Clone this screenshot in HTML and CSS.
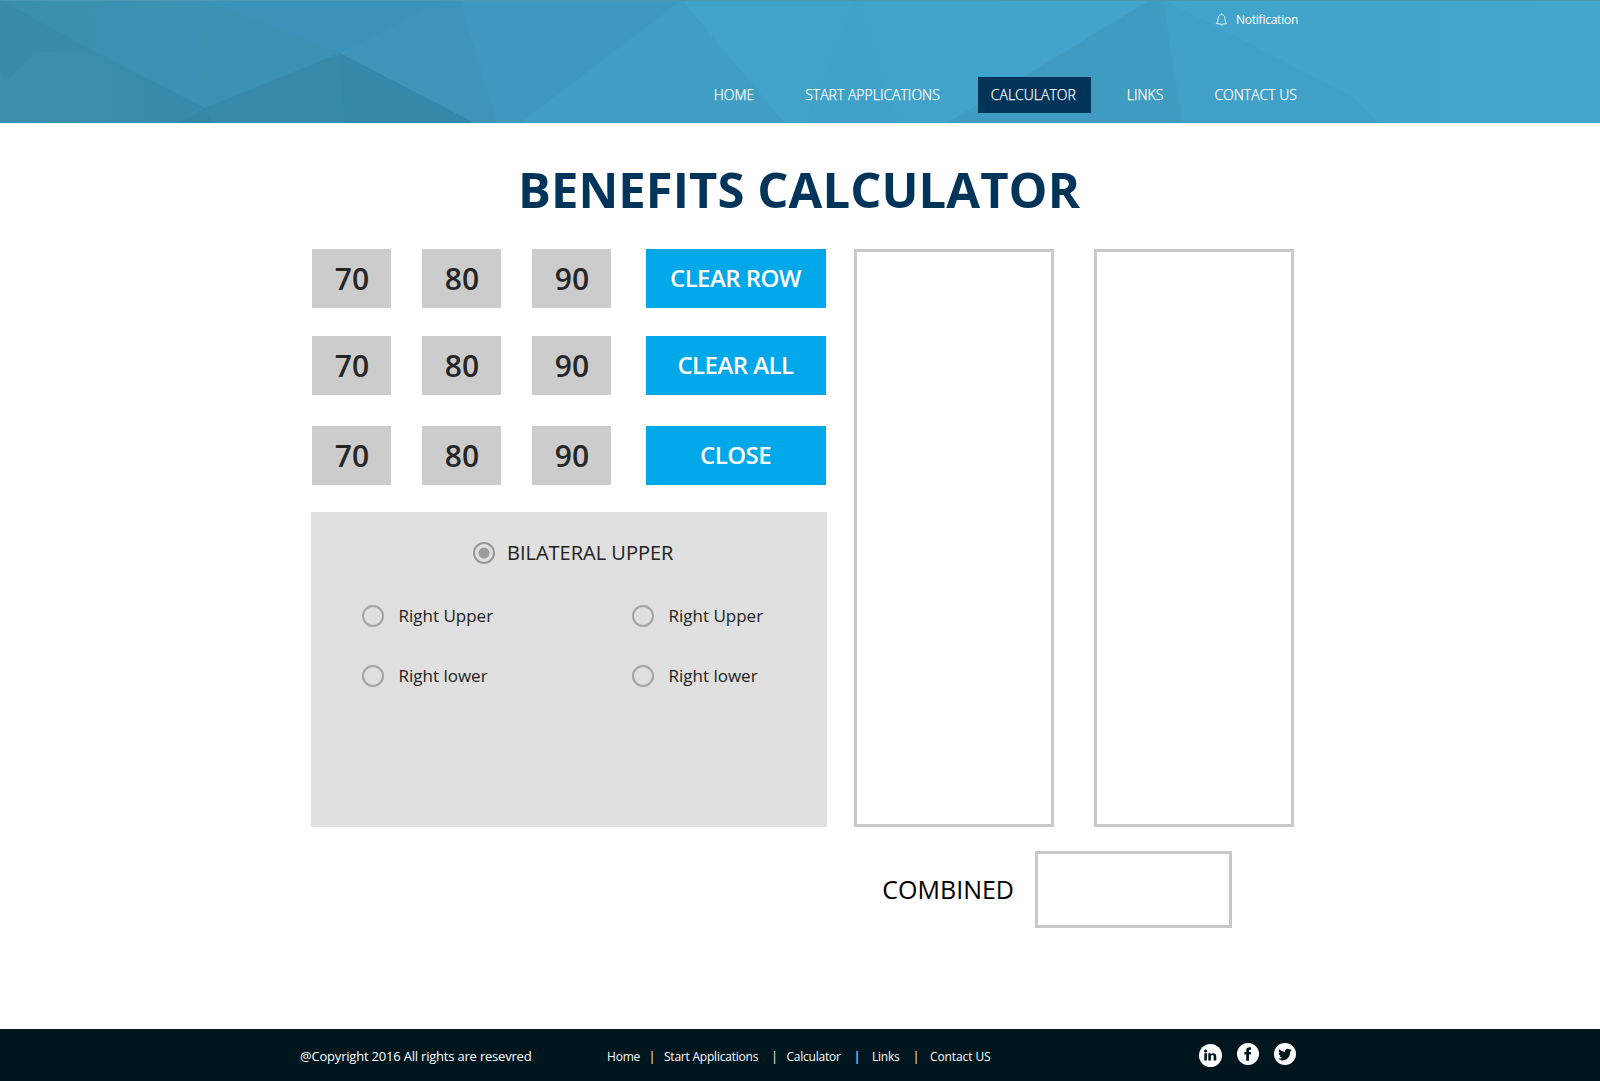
FILE: index.html
```html
<!DOCTYPE html>
<html lang="en">
<head>
<meta charset="utf-8">
<title>Benefits Calculator</title>
<link rel="stylesheet" href="styles.css">
</head>
<body>
<header class="header">
  <svg class="header-art" viewBox="0 0 1600 123" preserveAspectRatio="none" aria-hidden="true">
    <defs>
      <linearGradient id="sky" x1="0" x2="1" y1="0" y2="0">
        <stop offset="0" stop-color="#3b8fad"/><stop offset=".12" stop-color="#3b92b4"/>
        <stop offset=".28" stop-color="#3c95b9"/><stop offset=".4" stop-color="#409dc3"/>
        <stop offset=".5" stop-color="#42a3ca"/><stop offset="1" stop-color="#43a5cb"/>
      </linearGradient>
      <linearGradient id="slope" x1="0" x2="1" y1="0" y2="0">
        <stop offset="0" stop-color="#3b8fad"/><stop offset="1" stop-color="#388aaa"/>
      </linearGradient>
    </defs>
    <rect width="1600" height="123" fill="url(#sky)"/>
    <path d="M8 4 95 52H36L6 82 0 70V0Z" fill="#3889a8" opacity=".7"/>
    <path d="M8 4H78Q96 26 96 52Z" fill="#3b90af"/>
    <path d="M36 52H95L205 108 212 123H0V90Z" fill="url(#slope)"/>
    <path d="M205 0 340 53 205 108 197 60Z" fill="#3b92b3" opacity=".6"/>
    <path d="M205 0H445L340 53Z" fill="#3c93b8"/>
    <path d="M340 53 475 123H180L205 108Z" fill="#388aab"/>
    <path d="M340 53 475 123H345Z" fill="#3686a7" opacity=".6"/>
    <path d="M205 108 212 123H180Z" fill="#3686a6"/>
    <path d="M340 53 445 0H460L497 123H475Z" fill="#3d96ba"/>
    <path d="M460 0H682L520 123H497Z" fill="#3f99be"/>
    <path d="M682 0 520 123H785Z" fill="#409ec5"/>
    <path d="M682 0H855L805 123H785Z" fill="#42a3ca"/>
    <path d="M855 0 805 123H900Z" fill="#409fc5" opacity=".5"/>
    <path d="M1150 0H1163L1183 123H947Z" fill="#409bc1"/>
    <path d="M1163 0 1350 95 1380 123H1183Z" fill="#41a0c7"/>
    <rect width="1600" height="1" fill="#4b98b5"/>
  </svg>
  <div class="header-inner">
    <a class="notify"><svg class="bell" viewBox="0 0 13 13"><path d="M6.500 .3V1.500M1.200 10.500C3.400 8.600 2.800 6.500 3.400 3.900 3.900 1 9.100 1 9.600 3.900 10.200 6.500 9.600 8.600 11.800 10.500Q6.500 12 1.200 10.500ZM5.300 11.600Q6.500 13 7.700 11.600"/></svg>Notification</a>
    <nav class="nav">
      <a class="home">HOME</a>
      <a class="start">START APPLICATIONS</a>
      <a class="active">CALCULATOR</a>
      <a class="links">LINKS</a>
      <a>CONTACT US</a>
    </nav>
  </div>
</header>
<main class="main">
  <h1 class="title">BENEFITS CALCULATOR</h1>
  <div class="board">
    <section class="controls">
      <div class="row"><button class="num">70</button><button class="num">80</button><button class="num">90</button><button class="cmd">CLEAR ROW</button></div>
      <div class="row"><button class="num">70</button><button class="num">80</button><button class="num">90</button><button class="cmd">CLEAR ALL</button></div>
      <div class="row last"><button class="num">70</button><button class="num">80</button><button class="num">90</button><button class="cmd">CLOSE</button></div>
      <div class="panel">
        <label class="option main-option"><i class="radio on"></i><span>BILATERAL UPPER</span></label>
        <div class="options">
          <label class="option"><i class="radio"></i><span>Right Upper</span></label>
          <label class="option"><i class="radio"></i><span>Right Upper</span></label>
          <label class="option"><i class="radio"></i><span>Right lower</span></label>
          <label class="option"><i class="radio"></i><span>Right lower</span></label>
        </div>
      </div>
    </section>
    <div class="column"></div>
    <div class="column"></div>
  </div>
  <div class="combined"><span>COMBINED</span><div class="result"></div></div>
</main>
<footer class="footer">
  <div class="footer-inner">
    <p class="copy">@Copyright 2016 All rights are resevred</p>
    <nav class="footer-nav">
      <a class="f-home">Home</a><b>|</b>
      <a class="f-start">Start Applications</a><b>|</b>
      <a class="f-calc">Calculator</a><b>|</b>
      <a class="f-links">Links</a><b>|</b>
      <a class="f-contact">Contact US</a>
    </nav>
    <div class="social">
      <svg class="in" viewBox="0 0 23 23"><circle cx="11.500" cy="11.500" r="11.500" fill="#fff"/><path d="M5.300 9.300H7.900V16.500H5.300ZM9.300 9.300H11.700V10.300C13 8.500 17.300 8.600 17.300 12.200V16.500H14.700V12.700C14.700 10.500 11.900 10.500 11.900 12.700V16.500H9.300Z"/><circle cx="6.600" cy="6.900" r="1.500"/></svg>
      <svg viewBox="0 0 22 22"><circle cx="11" cy="11" r="11" fill="#fff"/><path d="M9.200 17.700V11.600H7.300V8.900H9.200V7.300C9.200 4.900 10.700 4 14 4.400V6.900C12.500 6.700 12 6.900 12 7.900V8.900H14.100L13.800 11.600H12V17.700Z"/></svg>
      <svg viewBox="0 0 22 22"><circle cx="11" cy="11" r="11" fill="#fff"/><path d="M17.800 7.100 16.200 8.700C16.300 14 12.500 17.600 8.200 17.400Q5.900 17.200 4.300 15.800 6.700 15.900 7.900 14.600 5.900 14.200 5.500 12.700H6.700Q4.600 11.700 4.700 9.700L5.900 10Q4 8.200 5.200 6.200 7.600 9 11 9C10.600 6.500 13.400 4.600 15.300 6.400L17.200 5.700 16.300 7.200Z"/></svg>
    </div>
  </div>
</footer>
</body>
</html>
```
FILE: styles.css
```css
* { box-sizing: border-box; }
body { margin: 0; background: #fff; font-family: "Open Sans", "Noto Sans", sans-serif; height: 1081px; display: flex; flex-direction: column; overflow: hidden; }
.header { height: 123px; position: relative; color: #fff; }
.header-art { position: absolute; inset: 0; width: 100%; height: 123px; display: block; }
.header-inner { position: relative; width: 1000px; margin: 0 auto; height: 123px; padding: 11px 3px 0 0; display: flex; flex-direction: column; align-items: flex-end; }
.notify { display: flex; font-size: 12px; line-height: 18px; gap: 8px; letter-spacing: -.25px; margin-right: -1px; }
.bell { width: 13px; height: 13px; margin-top: 2px; fill: none; stroke: #d9edf5; stroke-width: 1; }
.nav { display: flex; margin-top: 48px; height: 36px; line-height: 36px; font-size: 14px; font-weight: 300; white-space: nowrap; -webkit-text-stroke: .25px #fff; }
.nav .home { margin-right: 51px; }
.nav .start { margin-right: 38px; }
.nav .active { background: #003459; width: 113px; padding-left: 13px; margin-right: 36px; }
.nav .links { margin-right: 51px; }
.main { flex: 1; width: 983px; margin-left: 311px; }
.title { margin: 31px 0 0 -21px; width: 1018px; height: 70px; line-height: 70px; text-align: center; font-size: 49px; letter-spacing: .06px; font-weight: 700; color: #003459; white-space: nowrap; }
.board { display: flex; height: 578px; margin-top: 25px; }
.controls { width: 516px; margin-right: 27px; }
.row { display: flex; margin: 0 1px 28px; height: 59px; gap: 31px; }
.row.last { margin-top: 31px; margin-bottom: 27px; }
.num, .cmd { border: 0; font-family: inherit; font-weight: 600; height: 59px; }
.num { width: 79px; padding: 0 0 0 1px; background: #ccc; color: #262626; font-size: 30px; line-height: 59px; }
.cmd { width: 180px; padding: 0 1px 2px 0; margin-left: 4px; background: #00a8e9; color: #fff; font-size: 24px; line-height: 57px; letter-spacing: -.55px; }
.panel { height: 315px; background: #e0e0e0; padding-top: 26px; color: #222; }
.option { display: flex; align-items: center; height: 30px; }
.option span { margin-top: -2px; }
.main-option { font-size: 20px; padding-left: 162px; gap: 12px; }
.radio { width: 22px; height: 22px; border: 2px solid #a3a3a3; border-radius: 50%; }
.radio.on { border-color: #999; background: radial-gradient(circle, #9c9c9c 5px, transparent 6px); }
.options { display: grid; grid-template-columns: 270px 1fr; row-gap: 30px; padding: 33px 0 0 50.500px; font-size: 17px; }
.options .option { gap: 15px; }
.column { width: 200px; border: 3px solid #c8c8c8; margin-right: 40px; flex-shrink: 0; }
.column:last-child { margin-right: 0; }
.combined { display: flex; justify-content: flex-end; align-items: center; margin: 24px 62px 0 0; gap: 21px; font-size: 25px; color: #000; }
.combined span { margin-top: -2px; }
.result { width: 197px; height: 77px; border: 3px solid #c8c8c8; }
.footer { height: 52px; background: #00161f; color: #fff; }
.footer-inner { width: 1000px; margin: 0 auto; display: flex; }
.copy { margin: 0; width: 307px; font-size: 13px; line-height: 54px; letter-spacing: -.2px; white-space: nowrap; }
.footer-nav { display: flex; font-size: 12px; line-height: 55px; letter-spacing: -.22px; white-space: nowrap; }
.footer-nav b { font-weight: 400; width: 7px; text-align: center; margin-right: 8.500px; }
.f-home { width: 41.500px; }
.f-start { width: 107px; }
.f-calc { width: 67px; }
.f-links { width: 40.500px; margin-left: 3px; }
.f-contact { margin-left: 2px; letter-spacing: -.1px; }
.social { display: flex; margin: 14px 4px 0 auto; gap: 15px; }
.social svg { width: 22px; height: 22px; fill: #00161f; }
.social .in { width: 23px; height: 23px; margin-top: 1px; }
```
